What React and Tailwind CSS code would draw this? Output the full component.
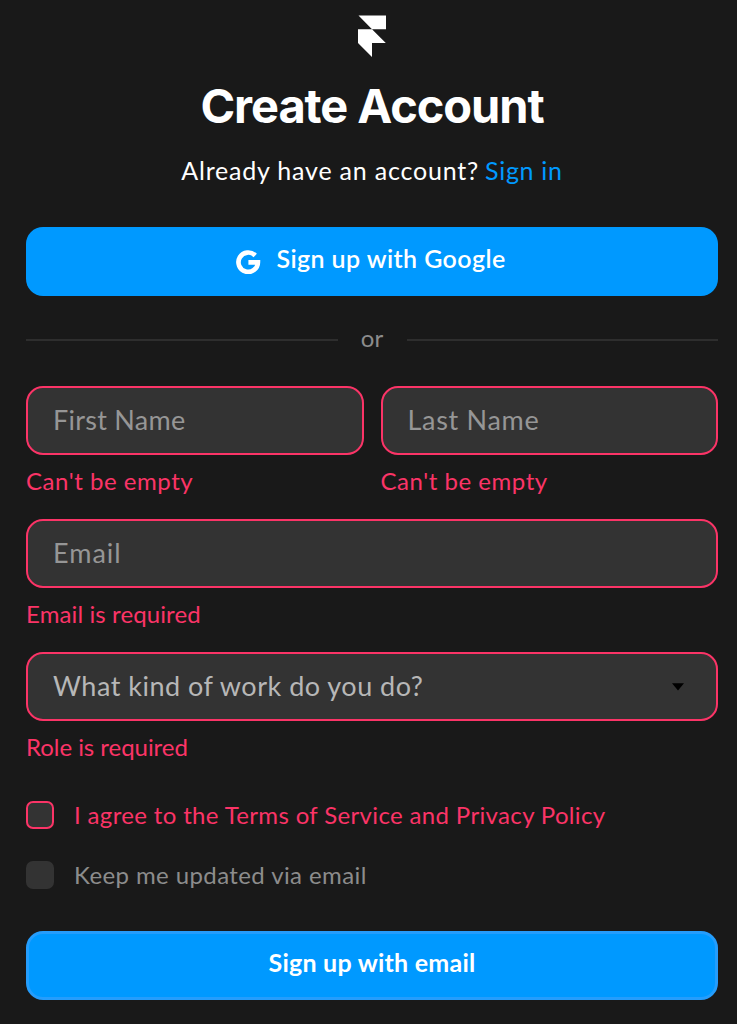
function FramerLogo() {
  return (
    <svg className="mx-auto block h-[42px] w-7" viewBox="0 0 28 42" fill="#fff" aria-hidden="true">
      <path d="M0.5 0.5H28V14.3H14ZM0 14.3H14L27.8 28H14V42L0 28Z" />
    </svg>
  );
}

function GoogleMark() {
  return (
    <svg className="mt-[6px] h-6 w-[25px] shrink-0" viewBox="0 0 25 24" fill="none" aria-hidden="true">
      <path
        d="M19.2 5.5A9.7 9.7 0 1 0 21.9 12.3H12.4"
        stroke="#fff"
        strokeWidth="4.7"
      />
    </svg>
  );
}

const fieldClass =
  "block h-[69px] w-full rounded-[17px] border-2 border-[#fb3467] bg-[#333] text-[27px] outline-none placeholder:text-[#969696] placeholder:opacity-100";

function Field({ error, errorClass, children }) {
  return (
    <div className="h-[133px] min-w-0 flex-1">
      {children}
      <p className={`mt-[11px] whitespace-nowrap text-2xl leading-[30px] text-[#fb3467] ${errorClass}`}>{error}</p>
    </div>
  );
}

export default function App() {
  return (
    <main className="h-[1024px] w-[737px] overflow-hidden bg-[#191919] pl-[26px] pr-[19px] pt-[15px] font-[Lato,sans-serif] text-white">
      <FramerLogo />
      <h1 className="mt-[21px] whitespace-nowrap text-center font-[Inter,sans-serif] text-[47px] font-bold leading-[56px] tracking-[-1.08px]">
        Create Account
      </h1>
      <p className="mt-[21px] flex justify-center whitespace-nowrap text-[25px] leading-[30px]">
        <span className="tracking-[0.8px]">Already have an account?</span>
        <a className="ml-[6px] tracking-[0.7px] text-[#0099ff]" href="#">Sign in</a>
      </p>

      <button className="mt-[42px] flex h-[69px] w-full items-center justify-center gap-[15px] rounded-[17px] bg-[#0099ff] pb-[5px] pr-0.5 text-[25px] font-semibold tracking-[0.41px]">
        <GoogleMark />
        Sign up with Google
      </button>

      <div className="mb-[31px] mt-[29px] flex h-[30px] items-center">
        <span className="h-0.5 flex-1 bg-[#2e2e2e]" />
        <span className="w-[69px] pb-[5px] text-center text-2xl leading-[30px] text-[#8c8c8c]">or</span>
        <span className="h-0.5 flex-1 bg-[#2e2e2e]" />
      </div>

      <form>
        <div className="flex gap-[17px]">
          <Field error="Can't be empty" errorClass="tracking-[0.54px]">
            <input className={`${fieldClass} pb-0.5 pl-[25px] tracking-[0.27px]`} placeholder="First Name" />
          </Field>
          <Field error="Can't be empty" errorClass="tracking-[0.54px]">
            <input className={`${fieldClass} pb-0.5 pl-[25px] tracking-[0.7px]`} placeholder="Last Name" />
          </Field>
        </div>
        <Field error="Email is required" errorClass="tracking-[0.11px]">
          <input className={`${fieldClass} pb-0.5 pl-[25px] tracking-[1px]`} placeholder="Email" />
        </Field>
        <Field error="Role is required" errorClass="tracking-[-0.04px]">
          <button
            type="button"
            className={`${fieldClass} pb-px pl-[25px] pr-8`}
          >
            <span className="flex items-center justify-between">
              <span className="tracking-[0.5px] text-[#b7b7b7]">What kind of work do you do?</span>
              <svg className="mt-px h-2 w-3" viewBox="0 0 12 8" aria-hidden="true">
                <path d="M0 0.3H12L6 7.6Z" fill="#000" />
              </svg>
            </span>
          </button>
        </Field>

        <div className="mt-4 flex h-7 items-center text-[#fb3467]">
          <span className="size-7 shrink-0 rounded-[7px] border-2 border-[#fb3467] bg-[#333]" />
          <span className="ml-5 whitespace-nowrap pb-px text-2xl leading-[30px] tracking-[0.35px]">
            I agree to the Terms of Service and Privacy Policy
          </span>
        </div>
        <div className="mt-8 flex h-7 items-center text-[#8c8c8c]">
          <span className="size-7 shrink-0 rounded-[7px] bg-[#333]" />
          <span className="ml-5 whitespace-nowrap pb-px text-2xl leading-[30px] tracking-[0.4px]">
            Keep me updated via email
          </span>
        </div>

        <button
          type="button"
          className="mt-[42px] block h-[69px] w-full rounded-[17px] border-[3px] border-[#259dfc] bg-[#0099ff] pb-[5px] text-[25px] font-bold tracking-[0.24px]"
        >
          Sign up with email
        </button>
      </form>
    </main>
  );
}
